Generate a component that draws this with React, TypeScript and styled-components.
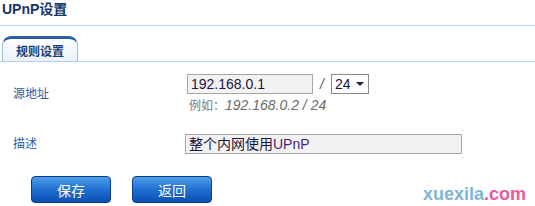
import styled, { createGlobalStyle } from 'styled-components'

const Global = createGlobalStyle`
  body {
    margin: 0;
    background: #ffffff;
    font-family: "Liberation Sans", "Noto Sans CJK SC", Arial, sans-serif;
  }
`

const Page = styled.div`
  width: 535px;
  height: 206px;
  overflow: hidden;
  display: flex;
  flex-direction: column;
`

const Header = styled.div`
  height: 26px;
  padding: 1px 0 0 2px;
  border-bottom: 1px solid #b9d1ea;
  box-sizing: border-box;
`

const Title = styled.h1`
  margin: 0;
  font-size: 14px;
  line-height: 17px;
  font-weight: bold;
  color: #15356b;
`

const TabBar = styled.div`
  margin-top: 10px;
  padding-left: 2px;
  border-bottom: 1px solid #b9d1ea;
  display: flex;
`

const Tab = styled.div`
  width: 76px;
  height: 25px;
  box-sizing: border-box;
  border: 1px solid #9cbbe0;
  border-bottom: none;
  border-top: 3px solid #2d5ea8;
  border-radius: 9px 9px 0 0;
  background: linear-gradient(#ffffff, #e9f1fa);
  display: flex;
  align-items: center;
  justify-content: center;
  font-size: 12px;
  font-weight: bold;
  color: #1b3e78;
  padding-top: 1px;
`

const Form = styled.div`
  display: grid;
  grid-template-columns: 186px 1fr;
  padding: 12px 0 0 13px;
  row-gap: 20px;
`

const Label = styled.div<{ $top: number }>`
  font-size: 12px;
  line-height: 14px;
  color: #2c5ca8;
  padding-top: ${({ $top }) => $top}px;
`

const Field = styled.div<{ $shift: number }>`
  display: flex;
  flex-direction: column;
  gap: 3px;
  margin-left: ${({ $shift }) => -$shift}px;
`

const Line = styled.div`
  display: flex;
  align-items: center;
  gap: 7px;
`

const TextBox = styled.div<{ $width: number }>`
  width: ${({ $width }) => $width}px;
  height: 20px;
  box-sizing: border-box;
  border: 1px solid #a6a6a6;
  background: #f2f2f2;
  font-size: 14px;
  line-height: 18px;
  padding-left: 3px;
  color: #1a1440;
  white-space: nowrap;
`

const Accent = styled.span`
  color: #4a1f7a;
`

const Slash = styled.span`
  font-size: 14px;
  color: #555;
  font-style: italic;
`

const Select = styled.div`
  width: 38px;
  height: 20px;
  box-sizing: border-box;
  border: 1px solid #8a8a8a;
  background: #fff;
  display: flex;
  align-items: center;
  justify-content: space-between;
  padding: 0 4px 0 3px;
  font-size: 14px;
  color: #1a1440;
`

const Caret = styled.span`
  width: 0;
  height: 0;
  border-left: 4px solid transparent;
  border-right: 4px solid transparent;
  border-top: 4px solid #1a1a3a;
`

const Hint = styled.div`
  font-size: 12px;
  line-height: 16px;
  color: #7a7a7a;
  padding-left: 2px;
  white-space: nowrap;
`

const HintValue = styled.span`
  font-size: 14px;
  font-style: italic;
  color: #6a6a6a;
`

const Footer = styled.div`
  display: flex;
  align-items: flex-start;
  padding: 22px 9px 0 31px;
  gap: 21px;
`

const Button = styled.button`
  width: 80px;
  height: 27px;
  border: 1px solid #0b3d8c;
  border-radius: 4px;
  background: linear-gradient(#4f9de9 0%, #2170d2 50%, #0a4fb2 100%);
  color: #ffffff;
  font-size: 14px;
  font-family: "Liberation Sans", "Noto Sans CJK SC", sans-serif;
  padding: 0;
`

const Watermark = styled.div`
  margin-left: auto;
  margin-top: 8px;
  font-size: 18px;
  line-height: 21px;
  font-weight: bold;
  color: #7ab6d6;
`

const Dot = styled.span`
  color: #ea5b9d;
`

export default function App() {
  return (
    <Page>
      <Global />
      <Header>
        <Title>UPnP设置</Title>
      </Header>
      <TabBar>
        <Tab>规则设置</Tab>
      </TabBar>
      <Form>
        <Label $top={13}>源地址</Label>
        <Field $shift={12}>
          <Line>
            <TextBox $width={126}>192.168.0.1</TextBox>
            <Slash>/</Slash>
            <Select>
              24
              <Caret />
            </Select>
          </Line>
          <Hint>
            例如：<HintValue>192.168.0.2 / 24</HintValue>
          </Hint>
        </Field>
        <Label $top={3}>描述</Label>
        <Field $shift={14}>
          <TextBox $width={277}>
            整个内网使用<Accent>UPnP</Accent>
          </TextBox>
        </Field>
      </Form>
      <Footer>
        <Button>保存</Button>
        <Button>返回</Button>
        <Watermark>
          xuexila<Dot>.com</Dot>
        </Watermark>
      </Footer>
    </Page>
  )
}
